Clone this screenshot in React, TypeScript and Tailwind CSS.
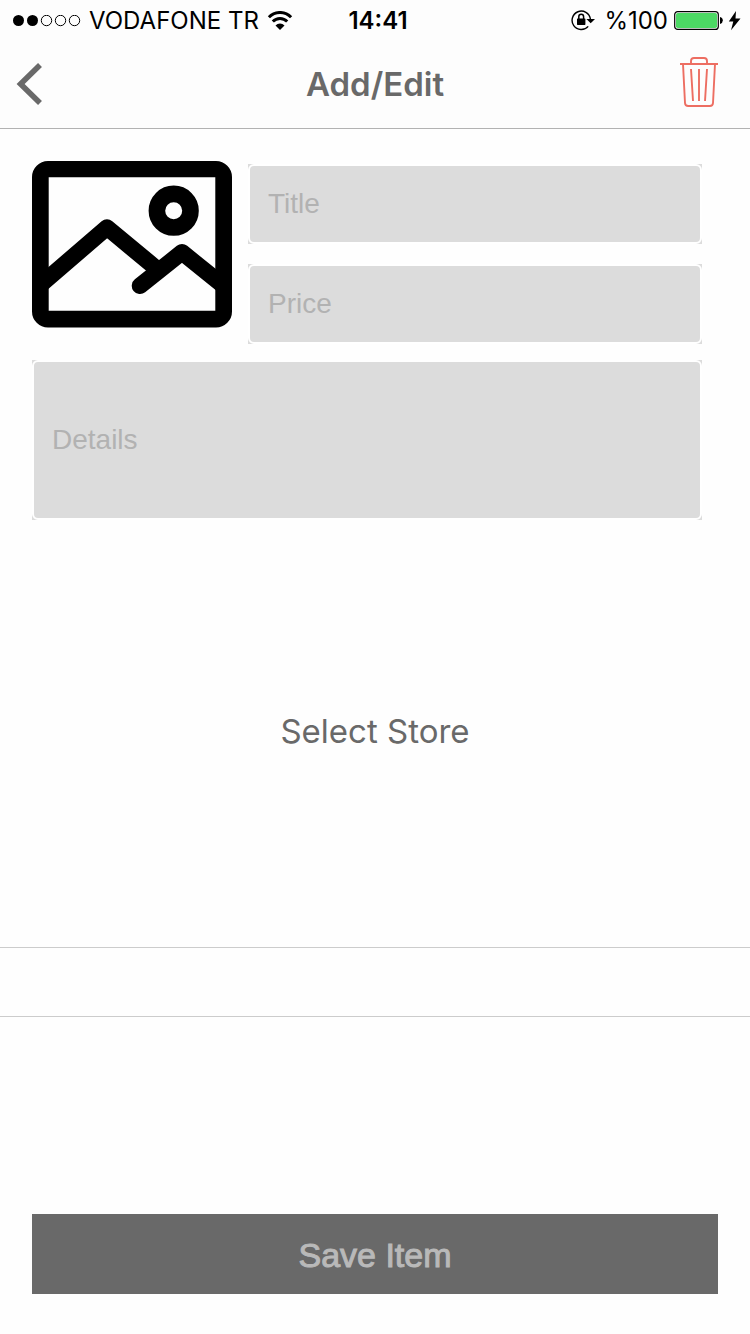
import React from "react";

function StatusBar() {
  return (
    <div className="relative flex h-10 items-center justify-between pt-0.5 pr-2 pl-3 font-['Inter','Noto_Sans',sans-serif] text-2xl text-black">
      <div className="flex items-center gap-2">
        <svg width="69" height="12" viewBox="0 0 69 12" aria-hidden="true">
          <circle cx="6.5" cy="5.5" r="5.5" />
          <circle cx="20.5" cy="5.5" r="5.5" />
          <g fill="none" stroke="#000" strokeWidth="1">
            <circle cx="34.5" cy="5.5" r="5.2" />
            <circle cx="48.5" cy="5.5" r="5.2" />
            <circle cx="62.5" cy="5.5" r="5.2" />
          </g>
        </svg>
        <span>VODAFONE TR</span>
        <svg width="26" height="20" viewBox="0 0 26 20" fill="none" stroke="#000" aria-hidden="true">
          <path d="M1.900 6.200A15.400 15.400 0 0 1 24.100 6.200" strokeWidth="3" />
          <path d="M5.800 10.500A10 10 0 0 1 20.200 10.500" strokeWidth="3" />
          <path d="M13 19L8.500 14.500A6.200 6.200 0 0 1 17.500 14.500Z" fill="#000" stroke="none" />
        </svg>
      </div>
      <span className="absolute inset-x-0 pl-1.5 text-center font-semibold">14:41</span>
      <div className="flex items-center">
        <svg className="mr-2" width="25" height="22" viewBox="0 0 25 22" fill="none" stroke="#000" aria-hidden="true">
          <path d="M17.2 16.400A9.200 9.200 0 1 1 19.4 9" strokeWidth="1.4" />
          <path d="M15.4 9h8.600l-4.300 4.300z" fill="#000" stroke="none" />
          <rect x="6" y="8.500" width="8.400" height="6.400" rx="0.6" fill="#000" stroke="none" />
          <path d="M7.800 9V6.700a2.400 2.400 0 0 1 4.800 0v2.300" strokeWidth="1.500" />
        </svg>
        <span>%100</span>
        <svg className="ml-1.5" width="68" height="20" viewBox="0 0 68 20" aria-hidden="true">
          <rect x="0.7" y="0.600" width="43.600" height="17.800" rx="3" fill="none" stroke="#000" strokeWidth="1.2" />
          <rect x="2" y="1.900" width="41" height="15.200" rx="1.800" fill="#4cd964" />
          <path d="M46 6q2.800 .8 2.800 3.500t-2.800 3.500z" />
          <path d="M62 0L54.800 10.600h4.500L57 19.200 66.500 7.600h-5z" />
        </svg>
      </div>
    </div>
  );
}

function Header() {
  return (
    <header className="border-b border-[#b2b2b2] bg-[#fdfdfd]">
      <StatusBar />
      <div className="flex h-22 items-center justify-between pr-8 pl-4">
        <button type="button" aria-label="Back" className="w-[38px]">
          <svg width="28" height="44" viewBox="0 0 28 44" fill="none" stroke="#696969" strokeWidth="5.6" aria-hidden="true">
            <path d="M24 3L4.6 22 24 41" />
          </svg>
        </button>
        <h1 className="pl-4 font-['Inter','Noto_Sans',sans-serif] text-[33px] leading-10 font-semibold text-[#696969]">Add/Edit</h1>
        <button type="button" aria-label="Delete item">
          <svg width="38" height="58" viewBox="0 0 38 58" fill="none" stroke="#ed6e62" strokeWidth="1.9" aria-hidden="true">
            <path d="M0 9h38" />
            <path d="M11 9V6q0-3 3-3h10q3 0 3 3v3" />
            <path d="M3 9l2 39q.2 3 3.200 3h21.600q3 0 3.200-3l2-39" />
            <path d="M11 14l2 32M19 14v32M27 14l-2 32" />
          </svg>
        </button>
      </div>
    </header>
  );
}

function PictureIcon() {
  return (
    <svg width="200" height="167" viewBox="0 0 200 167" fill="none" stroke="#000" aria-hidden="true">
      <path fillRule="evenodd" stroke="none" fill="#000" d="M16 0H184A16 16 0 0 1 200 16V150.500A16 16 0 0 1 184 166.500H16A16 16 0 0 1 0 150.500V16A16 16 0 0 1 16 0ZM16.700 16.300V149.800H183.300V16.300Z" />
      <circle cx="141.700" cy="49.700" r="16.800" strokeWidth="16.600" />
      <g strokeWidth="16.500" strokeLinejoin="round">
        <path d="M10 122.500L75 66.500l53 44" />
        <path d="M108 124.800l42-33.500L190 123.500" strokeLinecap="round" />
      </g>
    </svg>
  );
}

function Field({ label, className }: { label: string; className: string }) {
  return (
    <div className="bg-[#dcdcdc]">
      <input
        type="text"
        aria-label={label}
        placeholder={label}
        className={`block w-full rounded-md border-2 border-white bg-[#dcdcdc] px-[18px] font-['Liberation_Sans',sans-serif] text-[28px] text-[#696969] outline-none placeholder:text-[#b2b2b2] ${className}`}
      />
    </div>
  );
}

export default function App() {
  return (
    <div className="flex min-h-screen flex-col bg-[#fefefe]">
      <Header />
      <main className="flex flex-1 flex-col">
        <form className="flex flex-1 flex-col" onSubmit={(e) => e.preventDefault()}>
          <div className="flex flex-col gap-4 pt-8 pr-12 pl-8">
            <div className="flex items-start gap-4">
              <button type="button" aria-label="Choose picture" className="shrink-0">
                <PictureIcon />
              </button>
              <div className="flex flex-1 flex-col gap-5 pt-[3px]">
                <Field label="Title" className="h-20" />
                <Field label="Price" className="h-20" />
              </div>
            </div>
            <Field label="Details" className="h-40" />
          </div>
          <button
            type="button"
            className="mt-[187px] self-center font-['Inter','Noto_Sans',sans-serif] text-[33px] leading-12 text-[#696969]"
          >
            Select Store
          </button>
          <div className="mt-[192px] h-[70px] border-y border-[#cccccc]" />
          <div className="mt-auto px-8 pt-8 pb-10">
            <button
              type="submit"
              className="h-20 w-full bg-[#696969] pt-0.5 font-['Liberation_Sans',sans-serif] text-[34px] text-[#b9b9b9] [-webkit-text-stroke:1px]"
            >
              Save Item
            </button>
          </div>
        </form>
      </main>
    </div>
  );
}
